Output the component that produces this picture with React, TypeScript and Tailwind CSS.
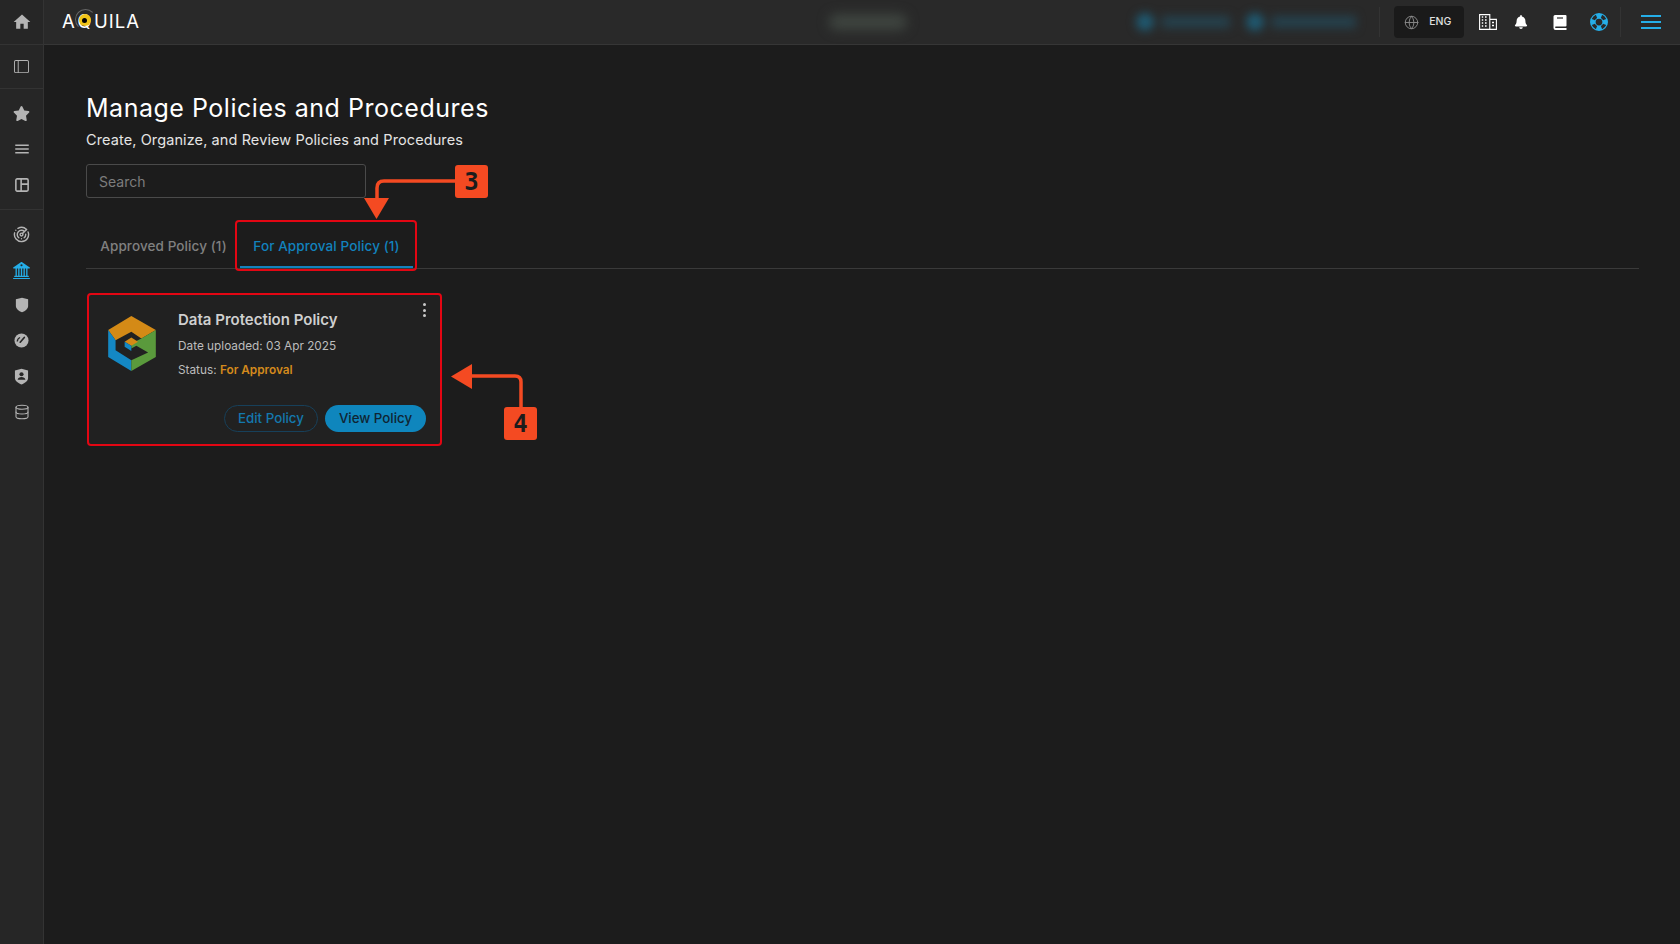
import { Database, Globe } from "lucide-react";
import { BsBank2, BsLayoutSidebar, BsLifePreserver } from "react-icons/bs";
import { FaBell, FaStar } from "react-icons/fa";
import { LuRadar } from "react-icons/lu";
import { MdHome, MdMenu } from "react-icons/md";

const iconClass = "h-[17px] w-[17px]";

function ShieldUser() {
  return (
    <svg viewBox="0 0 16 18" className="h-[17px] w-[15px]" fill="currentColor">
      <path d="M1 2.500 8 .8l7 1.700v7.800c0 3.400-3.200 5.700-7 7.200-3.800-1.500-7-3.800-7-7.200z" />
      <circle cx="8" cy="6.600" r="2.200" fill="#262626" />
      <path d="M3.800 12.500c.4-2 2.100-3 4.200-3s3.800 1 4.200 3z" fill="#262626" />
    </svg>
  );
}

function ShieldPlain() {
  return (
    <svg viewBox="0 0 16 18" className="h-[16px] w-[14px]" fill="currentColor">
      <path d="M1 2.500 8 .6l7 1.900v7.300c0 3.600-3.200 6-7 7.600-3.800-1.600-7-4-7-7.600z" />
    </svg>
  );
}

function Gauge() {
  return (
    <svg viewBox="0 0 16 16" className="h-[15px] w-[15px]">
      <circle cx="8" cy="8" r="7.500" fill="currentColor" />
      <path d="M6.600 9.800 11 4.800" stroke="#262626" strokeWidth="1.800" strokeLinecap="round" />
      <path d="M3.500 9a4.800 4.800 0 0 1 3-4.200" stroke="#262626" strokeWidth="1.400" fill="none" />
    </svg>
  );
}

function SplitPanel() {
  return (
    <svg viewBox="0 0 16 16" className="h-[14px] w-[14px]" fill="none" stroke="currentColor" strokeWidth="1.800">
      <rect x="1" y="1" width="14" height="14" rx="1.500" />
      <path d="M7 1v14M7 7h8" />
    </svg>
  );
}

function BuildingIcon() {
  return (
    <svg viewBox="0 0 18 16" className="h-[16px] w-[18px]" fill="none" stroke="#fff" strokeWidth="1.100">
      <path d="M.6.6h10.200v14.800H.6zM10.800 5.400h6.600v10h-6.600z" />
      <path d="M2.800 3h1.400M6 3h1.600M2.800 6h1.400M6 6h1.600M2.800 9h1.400M6 9h1.600M2.800 12h1.400M6 12h1.600M13 8.400h2M13 11.400h2" strokeWidth="1.500" />
    </svg>
  );
}

function BookIcon() {
  return (
    <svg viewBox="0 0 14 15" className="h-[15px] w-[14px]" fill="#fff">
      <path d="M2 0h10.500a1 1 0 0 1 1 1v9.500a1 1 0 0 1-1 1H2.500a1 1 0 0 0 0 1.500h11v2H2.500A2 2 0 0 1 .5 13V1.500A1.500 1.500 0 0 1 2 0z" />
      <path d="M4 3h6" stroke="#292929" strokeWidth="1.200" />
    </svg>
  );
}

function MenuBars() {
  return (
    <div className="flex w-[20px] flex-col gap-[4px]">
      <span className="h-[2px] bg-[#25aee8]" />
      <span className="h-[2px] bg-[#25aee8]" />
      <span className="h-[2px] bg-[#25aee8]" />
    </div>
  );
}

function CubeLogo() {
  return (
    <svg viewBox="41 33 142 164" className="h-[55px] w-[48px] shrink-0">
      <path d="M41 75 110 33l73 42-43 25-30-20-47 25z" fill="#d48a16" />
      <path d="M41 75l22 30v30l47 30v32l-69-42z" fill="#1488c4" />
      <path d="M183 75v80l-73 42v-32l50-23-35-20-15 8v-15l30-15z" fill="#5a9a3c" />
      <path d="M90 110l20-13 20 13-20 12z" fill="#d48a16" />
      <path d="M90 110l20 12v15l-20-12z" fill="#1488c4" />
    </svg>
  );
}

function Logo() {
  return (
    <div className="relative -mt-[1px] ml-[18px] flex items-center font-['Inter',sans-serif] text-[18.500px] leading-none font-normal tracking-[1.100px] text-white">
      <span>A</span>
      <span className="relative mx-[1px] inline-flex w-[16px] justify-center">
        <span>Q</span>
        <span className="absolute -top-[3px] -left-[2px] h-[21px] w-[21px] rounded-full border border-[#666666] border-r-transparent border-b-transparent" />
        <span className="absolute top-[2px] left-[2px] flex h-[12px] w-[12px] items-center justify-center rounded-full bg-[#f0c419]">
          <span className="h-[5px] w-[5px] rounded-full bg-black" />
        </span>
      </span>
      <span>UILA</span>
    </div>
  );
}

function Sidebar() {
  return (
    <aside className="flex w-[44px] shrink-0 flex-col border-r border-[#333333] bg-[#262626] text-[#b4b4b4]">
      <div className="flex h-[45px] items-center justify-center border-b border-[#333333]">
        <MdHome className="h-[20px] w-[20px]" />
      </div>
      <div className="flex h-[44px] items-center justify-center border-b border-[#333333]">
        <BsLayoutSidebar className="h-[15px] w-[15px]" />
      </div>
      <div className="grid h-[121px] auto-rows-[35.500px] place-items-center border-b border-[#333333] pt-[7px]">
        <FaStar className={iconClass} />
        <MdMenu className="h-[18px] w-[18px]" />
        <SplitPanel />
      </div>
      <div className="grid auto-rows-[35.400px] place-items-center pt-[7px]">
        <LuRadar className={iconClass} />
        <BsBank2 className="h-[17px] w-[17px] text-[#25aee8]" />
        <ShieldPlain />
        <Gauge />
        <ShieldUser />
        <Database className="h-[16px] w-[16px]" strokeWidth={1.6} />
      </div>
    </aside>
  );
}

function Header() {
  return (
    <header className="flex h-[45px] shrink-0 items-center border-b border-[#363636] bg-[#292929]">
      <Logo />
      <div className="ml-[689px] h-[16px] w-[78px] rounded-full bg-[#3f4540] blur-[6px]" />
      <div className="ml-[229px] flex items-center gap-[16px] blur-[5px]">
        <div className="flex items-center gap-[8px]">
          <span className="h-[18px] w-[18px] rounded-full bg-[#1f5a72]" />
          <span className="h-[12px] w-[68px] bg-[#25414d]" />
        </div>
        <div className="flex items-center gap-[8px]">
          <span className="h-[18px] w-[18px] rounded-full bg-[#1f5a72]" />
          <span className="h-[12px] w-[84px] bg-[#25414d]" />
        </div>
      </div>
      <div className="ml-[23px] h-[30px] w-px bg-[#333333]" />
      <div className="ml-[14px] flex h-[32px] w-[70px] items-center gap-[10px] rounded-[4px] bg-[#1a1a1a] pl-[10px]">
        <Globe className="h-[15px] w-[15px] text-[#8a8a8a]" strokeWidth={1.5} />
        <span className="font-['Inter',sans-serif] text-[10.500px] font-medium text-[#e0e0e0]">ENG</span>
      </div>
      <div className="ml-[15px]"><BuildingIcon /></div>
      <FaBell className="ml-[17px] h-[14px] w-[14px] text-white" />
      <div className="ml-[25px]"><BookIcon /></div>
      <BsLifePreserver className="ml-[23px] h-[18px] w-[18px] text-[#25aee8]" />
      <div className="ml-[12px] h-[30px] w-px bg-[#333333]" />
      <div className="ml-[20px]"><MenuBars /></div>
    </header>
  );
}

function PolicyCard() {
  return (
    <div className="relative flex h-[152px] w-[354px] flex-col rounded-[3px] bg-[#212121] px-[16px] pt-[16px] pb-[13px]">
      <div className="flex gap-[22px] pl-[4px] pt-[7px]">
        <CubeLogo />
        <div className="-mt-[6px] font-['Inter',sans-serif]">
          <p className="text-[15px] leading-[20px] font-semibold text-[#cfcfcf]">Data Protection Policy</p>
          <p className="mt-[8px] text-[11.800px] leading-[16px] text-[#bdbdbd]">Date uploaded: 03 Apr 2025</p>
          <p className="mt-[8px] text-[11.800px] leading-[16px] text-[#bdbdbd]">
            Status: <span className="font-semibold text-[#d48a1c]">For Approval</span>
          </p>
        </div>
      </div>
      <div className="absolute top-[10px] right-[16px] flex flex-col gap-[2.500px]">
        <span className="h-[3px] w-[3px] rounded-full bg-[#c8c8c8]" />
        <span className="h-[3px] w-[3px] rounded-full bg-[#c8c8c8]" />
        <span className="h-[3px] w-[3px] rounded-full bg-[#c8c8c8]" />
      </div>
      <div className="mt-auto flex justify-end gap-[7px] font-['Inter',sans-serif] text-[13.300px] font-medium">
        <button className="h-[27px] w-[94px] rounded-full border border-[#17405a] text-[#1478ad]">Edit Policy</button>
        <button className="h-[27px] w-[101px] rounded-full bg-[#0f86bd] text-[#0f2533]">View Policy</button>
      </div>
    </div>
  );
}

function Annotations() {
  return (
    <div className="pointer-events-none absolute inset-0">
      <div className="absolute top-[220px] left-[235px] h-[51px] w-[182px] rounded-[4px] border-2 border-[#e30613]" />
      <div className="absolute top-[293px] left-[87px] h-[153px] w-[355px] rounded-[4px] border-2 border-[#e30613]" />
      <svg className="absolute inset-0 h-[944px] w-[1680px]" viewBox="0 0 1680 944" fill="none">
        <path d="M456 181H384q-7 0-7 7v11" stroke="#f44a22" strokeWidth="3.500" />
        <path d="M364 198h25l-12.500 21z" fill="#f44a22" />
        <path d="M472 376h43q6 0 6 6v26" stroke="#f44a22" strokeWidth="3.500" />
        <path d="M472 364v25l-21-12.500z" fill="#f44a22" />
      </svg>
      <div className="absolute top-[165px] left-[455px] flex h-[33px] w-[33px] items-center justify-center rounded-[3px] bg-[#f44a22] font-['DejaVu_Sans_Mono',monospace] text-[24px] font-bold text-[#1c1c1c]">3</div>
      <div className="absolute top-[407px] left-[504px] flex h-[33px] w-[33px] items-center justify-center rounded-[3px] bg-[#f44a22] font-['DejaVu_Sans_Mono',monospace] text-[24px] font-bold text-[#1c1c1c]">4</div>
    </div>
  );
}

export default function App() {
  return (
    <div className="relative flex h-[944px] w-[1680px] overflow-hidden bg-[#1c1c1c] font-['Inter',sans-serif]">
      <Sidebar />
      <div className="flex min-w-0 flex-1 flex-col">
        <Header />
        <main className="flex-1 pt-[46px] pr-[41px] pl-[42px]">
          <h1 className="text-[25px] leading-[34px] font-normal tracking-[0.52px] text-white">Manage Policies and Procedures</h1>
          <p className="mt-[4px] text-[14.500px] leading-[22px] tracking-[0.1px] text-[#e4e4e4]">Create, Organize, and Review Policies and Procedures</p>
          <div className="mt-[13px] flex h-[34px] w-[280px] items-center rounded-[3px] border border-[#4a4a4a] pl-[12px] text-[14px] text-[#7d7d7d]">Search</div>
          <div className="mt-[20px] flex h-[51px] border-b border-[#3a3a3a] pl-[5px] text-[13.500px] font-medium tracking-[0.1px]">
            <div className="flex h-full w-[145px] items-center justify-center border-b-2 border-transparent pt-[8px] text-[#808080]">Approved Policy (1)</div>
            <div className="ml-[4px] flex h-full w-[173px] items-center justify-center border-b-2 border-[#1282bd] pt-[8px] text-[#1282bd]">For Approval Policy (1)</div>
          </div>
          <div className="mt-[24px] pl-[2px]">
            <PolicyCard />
          </div>
        </main>
      </div>
      <Annotations />
    </div>
  );
}
